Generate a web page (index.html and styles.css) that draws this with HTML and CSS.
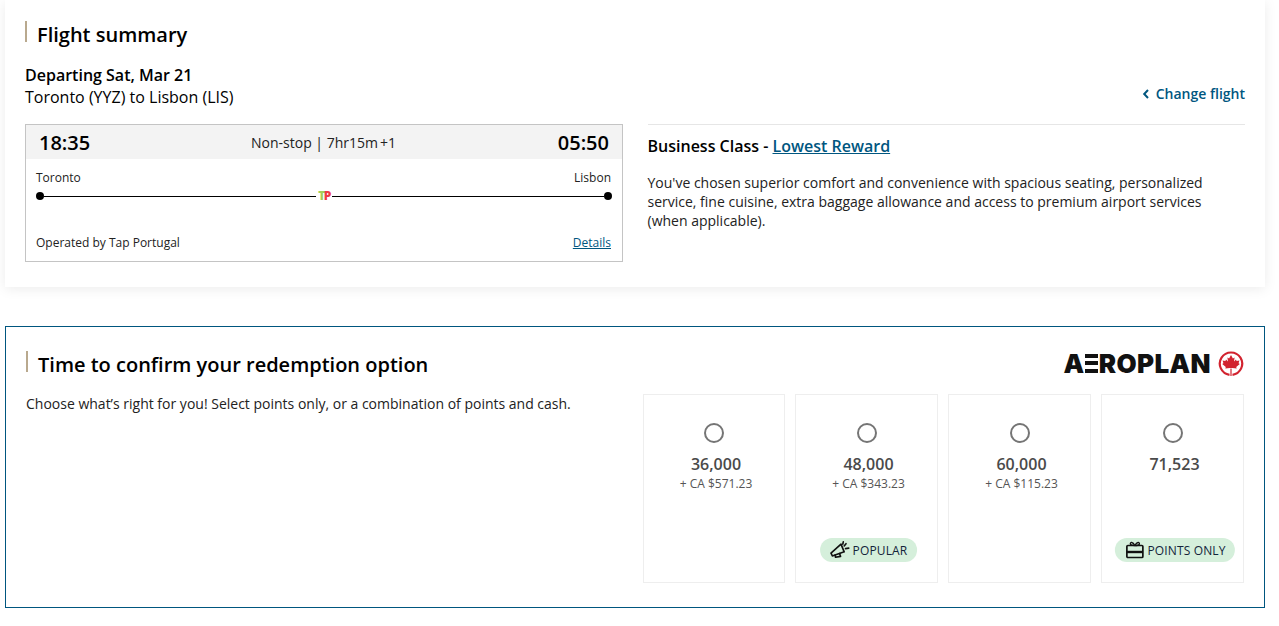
FILE: index.html
```html
<!DOCTYPE html>
<html lang="en">
<head>
<meta charset="utf-8">
<title>Flight summary</title>
<link rel="stylesheet" href="styles.css">
</head>
<body>
<section class="summary">
  <h2 class="heading">Flight summary</h2>
  <div class="route-row">
    <div class="route">
      <div class="route-date">Departing Sat, Mar 21</div>
      <div class="route-name">Toronto (YYZ) to Lisbon (LIS)</div>
    </div>
    <a class="change" href="#">
      <svg class="chev" width="8" height="12" viewBox="0 0 8 12"><path d="M6 2 2.2 6 6 10" fill="none" stroke="#00567f" stroke-width="2"/></svg>
      Change flight</a>
  </div>
  <div class="details-row">
    <div class="flight">
      <div class="flight-head">
        <span class="time">18:35</span>
        <span class="duration">Non-stop | 7hr15m<small>+1</small></span>
        <span class="time">05:50</span>
      </div>
      <div class="cities"><span>Toronto</span><span>Lisbon</span></div>
      <div class="track">
        <i class="dot"></i><i class="line"></i>
        <span class="tap"><b class="tap-t">T</b><b class="tap-p">P</b></span>
        <i class="line"></i><i class="dot"></i>
      </div>
      <div class="operated"><span>Operated by Tap Portugal</span><a href="#">Details</a></div>
    </div>
    <div class="cabin">
      <div class="cabin-title">Business Class - <a href="#">Lowest Reward</a></div>
      <p>You've chosen superior comfort and convenience with spacious seating, personalized service, fine cuisine, extra baggage allowance and access to premium airport services (when applicable).</p>
    </div>
  </div>
</section>

<section class="redeem">
  <div class="redeem-head">
    <h2 class="heading">Time to confirm your redemption option</h2>
    <div class="logo">
      <span class="logo-word">A<span class="logo-e">E</span>ROPLAN</span>
      <svg width="26" height="26" viewBox="0 0 26 26" aria-hidden="true">
        <path fill="none" stroke="#d2232f" stroke-width="2.200" d="M11.500 23.800A11.200 11.200 0 1 1 14.500 23.800"/>
        <path fill="none" stroke="#d2232f" stroke-width="1.200" d="M13 18v7"/>
        <path fill="#d2232f" d="M13 4l1.900 3.400 1.700-.9-.6 4 2-1.900.6 1.400 2.800-.5-.8 2.800 1.200.7-3.600 3 .5 1.500-4.600-.5-1.100.6-1.100-.6-4.600.5.500-1.500-3.600-3 1.200-.7-.8-2.800 2.800.5.600-1.400 2 1.900-.6-4 1.700.9z"/>
      </svg>
    </div>
  </div>
  <div class="redeem-body">
    <p class="choose">Choose what’s right for you! Select points only, or a combination of points and cash.</p>
    <div class="tiles">
      <div class="tile">
        <i class="radio"></i>
        <div class="points">36,000</div>
        <div class="cash">+ CA $571.23</div>
      </div>
      <div class="tile">
        <i class="radio"></i>
        <div class="points">48,000</div>
        <div class="cash">+ CA $343.23</div>
        <div class="badge">
          <svg width="20" height="20" viewBox="0 0 22 20" fill="none" stroke="#111" stroke-width="1.800" stroke-linejoin="round" stroke-linecap="round"><path d="M1 13.500 12 3.500l3.500 8.500L2.500 16.500z"/><path d="M5.500 15.500l.5 2.500 5.500-1-1-3"/><path d="M15.500 5.500l2-2.500M17 8.500l3.500-.5M14 3.500l.5-2.500"/></svg>
          <span>POPULAR</span>
        </div>
      </div>
      <div class="tile">
        <i class="radio"></i>
        <div class="points">60,000</div>
        <div class="cash">+ CA $115.23</div>
      </div>
      <div class="tile">
        <i class="radio"></i>
        <div class="points">71,523</div>
        <div class="badge badge-wide">
          <svg width="18" height="18" viewBox="0 0 18 18" fill="none" stroke="#111" stroke-width="1.700" stroke-linejoin="round"><rect x="1" y="4.500" width="16" height="12" rx="1"/><path d="M1 11h16" stroke-width="2.400"/><path d="M9 4.500C7 .5 4 1 4.500 3 4.800 4.300 7 4.500 9 4.500c2 0 4.200-.2 4.500-1.500C14 1 11 .5 9 4.500z" stroke-width="1.300"/></svg>
          <span>POINTS ONLY</span>
        </div>
      </div>
    </div>
  </div>
</section>
</body>
</html>
```
FILE: styles.css
```css
* { box-sizing: border-box; }
html, body { margin: 0; padding: 0; }
body {
  background: #fff;
  color: #000;
  font-family: "Open Sans", "Liberation Sans", sans-serif;
  padding: 0 14px 0 5px;
  height: 626px;
  overflow: hidden;
}
a { color: #00567f; }
p { margin: 0; }

.heading {
  margin: 0;
  height: 21px;
  font-size: 20px;
  line-height: 27px;
  font-weight: 600;
  border-left: 2px solid #b9a98e;
  padding-left: 10px;
  color: #000;
}

.summary {
  height: 287px;
  padding: 21px 20px 0;
  background: #fff;
  box-shadow: 0 2px 12px rgba(0, 0, 0, 0.08);
}
.route-row {
  display: flex;
  justify-content: space-between;
  align-items: flex-end;
  margin-top: 17px;
  height: 49px;
}
.route { font-size: 16px; line-height: 22px; }
.route-date { font-weight: 600; }
.change {
  display: flex;
  align-items: center;
  gap: 6px;
  font-size: 14px;
  font-weight: 600;
  line-height: 20px;
  text-decoration: none;
  margin-bottom: 4px;
}

.details-row {
  display: flex;
  gap: 25px;
  margin-top: 16px;
}
.flight {
  flex: 0 0 598px;
  height: 138px;
  border: 1px solid #c4c4c4;
  display: flex;
  flex-direction: column;
}
.flight-head {
  height: 34px;
  background: #f3f3f3;
  display: flex;
  align-items: center;
  justify-content: space-between;
  padding: 0 13px;
}
.time { font-size: 20px; font-weight: 600; }
.duration { font-size: 14px; color: #222; margin-right: 1px; }
.duration small { font-size: 14px; margin-left: 2px; }
.cities {
  display: flex;
  justify-content: space-between;
  padding: 10px 11px 0 10px;
  font-size: 12px;
  line-height: 17px;
  color: #222;
}
.track {
  display: flex;
  align-items: center;
  margin: 5px 10px 0;
  height: 10px;
}
.dot {
  flex: none;
  width: 8px;
  height: 8px;
  border-radius: 50%;
  background: #000;
}
.line { flex: 1; height: 1px; background: #000; }
.tap {
  flex: none;
  width: 16px;
  text-align: center;
  font-size: 12px;
  line-height: 10px;
  font-weight: 800;
  letter-spacing: -1.500px;
}
.tap b { font-weight: 800; }
.tap-t { color: #a5cf5a; }
.tap-p { color: #ee3a45; }
.operated {
  display: flex;
  justify-content: space-between;
  align-items: center;
  margin-top: 33px;
  padding: 0 11px 0 10px;
  font-size: 12px;
  line-height: 17px;
  color: #222;
}
.operated a { font-weight: 500; }

.cabin {
  flex: 1;
  border-top: 1px solid #e6e6e6;
  padding-top: 10px;
}
.cabin-title { font-size: 16px; line-height: 22px; font-weight: 600; margin-left: -0.5px; }
.cabin p {
  margin-top: 16px;
  margin-left: -0.5px;
  font-size: 14px;
  line-height: 19px;
  color: #222;
}

.redeem {
  margin-top: 39px;
  height: 282px;
  border: 1px solid #00567f;
  padding: 24px 20px 0;
}
.redeem-head {
  display: flex;
  justify-content: space-between;
  align-items: flex-start;
  height: 26px;
}
.logo { display: flex; align-items: center; gap: 7px; }
.logo-word {
  font-family: "Inter", "Liberation Sans", sans-serif;
  font-size: 26px;
  line-height: 26px;
  font-weight: 900;
  color: #111;
  letter-spacing: 0.4px;
}
.logo-e {
  display: inline-block;
  width: 13px;
  height: 19px;
  line-height: 19px;
  font-size: 16px;
  vertical-align: 4px;
  margin: 0 1px 0 0;
  color: transparent;
  background: repeating-linear-gradient(#111 0, #111 4px, transparent 4px, transparent 7.500px);
}
.redeem-body {
  display: flex;
  justify-content: space-between;
  margin-top: 17px;
}
.choose { font-size: 14px; line-height: 20px; color: #222; }
.tiles {
  flex: 0 0 601px;
  display: grid;
  grid-template-columns: 142px 143px 143px 143px;
  gap: 10px;
}
.tile {
  height: 189px;
  border: 1px solid #eee;
  padding-top: 28px;
  display: flex;
  flex-direction: column;
  align-items: center;
  position: relative;
}
.radio {
  width: 20px;
  height: 20px;
  border: 2px solid #757575;
  border-radius: 50%;
}
.points {
  margin: 10px 0 0 4px;
  font-size: 16px;
  line-height: 22px;
  font-weight: 600;
  color: #4a4a4a;
}
.cash { margin: 1px 0 0 4px; font-size: 12px; line-height: 16px; color: #555; }
.badge {
  position: absolute;
  bottom: 20px;
  left: calc(50% + 2px);
  transform: translateX(-50%);
  height: 24px;
  border-radius: 12px;
  background: #d5efdb;
  display: flex;
  align-items: center;
  gap: 3px;
  padding: 0 10px;
  font-size: 12px;
  font-weight: 500;
  letter-spacing: 0.15px;
  color: #13243a;
  white-space: nowrap;
}
.badge-wide { gap: 4px; padding: 0 9px 0 11px; }
```
